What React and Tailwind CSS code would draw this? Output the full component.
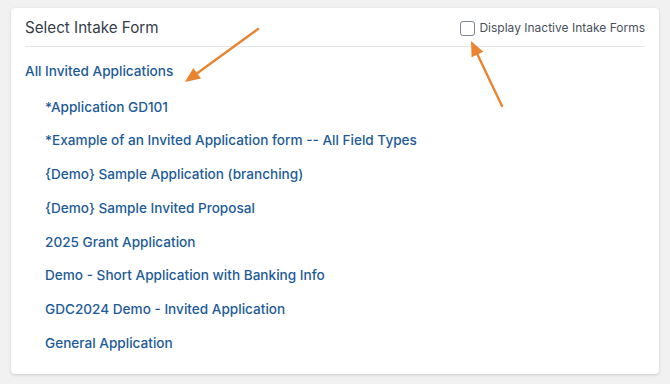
import React, { useState } from 'react';

const forms = [
  '*Application GD101',
  '*Example of an Invited Application form -- All Field Types',
  '{Demo} Sample Application (branching)',
  '{Demo} Sample Invited Proposal',
  '2025 Grant Application',
  'Demo - Short Application with Banking Info',
  'GDC2024 Demo - Invited Application',
  'General Application',
];

const Arrow = ({ x1, y1, x2, y2 }) => {
  // arrowhead drawn at (x2, y2)
  const ang = Math.atan2(y2 - y1, x2 - x1);
  const len = 15;
  const half = 6.5;
  const bx = x2 - Math.cos(ang) * len;
  const by = y2 - Math.sin(ang) * len;
  const px = -Math.sin(ang) * half;
  const py = Math.cos(ang) * half;
  return (
    <g>
      <line x1={x1} y1={y1} x2={bx} y2={by} stroke="#ea8430" strokeWidth="2.4" strokeLinecap="round" />
      <polygon points={`${x2},${y2} ${bx + px},${by + py} ${bx - px},${by - py}`} fill="#ea8430" />
    </g>
  );
};

const App = () => {
  const [showInactive, setShowInactive] = useState(false);

  return (
    <div className="relative w-[670px] h-[384px] bg-[#f1f1f1] pt-[8px] pl-[11px] font-['Inter',sans-serif]">
      <div className="w-[648px] h-[366px] bg-white rounded-[4px] shadow-[0_1px_3px_rgba(0,0,0,0.15)] px-[14px]">
        <div className="flex items-center justify-between h-[39px] pt-[2px] border-b border-[#e3e5e8]">
          <h2 className="text-[15.2px] text-[#363d47]">Select Intake Form</h2>
          <label className="flex items-center gap-[4px] text-[12px] text-[#4a515c] cursor-pointer">
            <input
              type="checkbox"
              checked={showInactive}
              onChange={(e) => setShowInactive(e.target.checked)}
              className="appearance-none w-[15px] h-[15px] rounded-[3px] border-[1.5px] border-[#7d8693] bg-white"
            />
            Display Inactive Intake Forms
          </label>
        </div>

        <div className="pt-[13.5px]">
          <a href="#" className="block text-[13.6px] font-medium leading-[20px] text-[#1d5b98]">
            All Invited Applications
          </a>
          <ul className="pl-[20px] pt-[13px]">
            {forms.map((f) => (
              <li key={f} className="h-[33.8px]">
                <a href="#" className="text-[13.6px] font-medium leading-[20px] text-[#1d5b98]">
                  {f}
                </a>
              </li>
            ))}
          </ul>
        </div>
      </div>

      <svg className="absolute inset-0 pointer-events-none" width="670" height="384">
        <Arrow x1={258} y1={29} x2={185} y2={82} />
        <Arrow x1={502} y1={106} x2={471} y2={41} />
      </svg>
    </div>
  );
};

export default App;
